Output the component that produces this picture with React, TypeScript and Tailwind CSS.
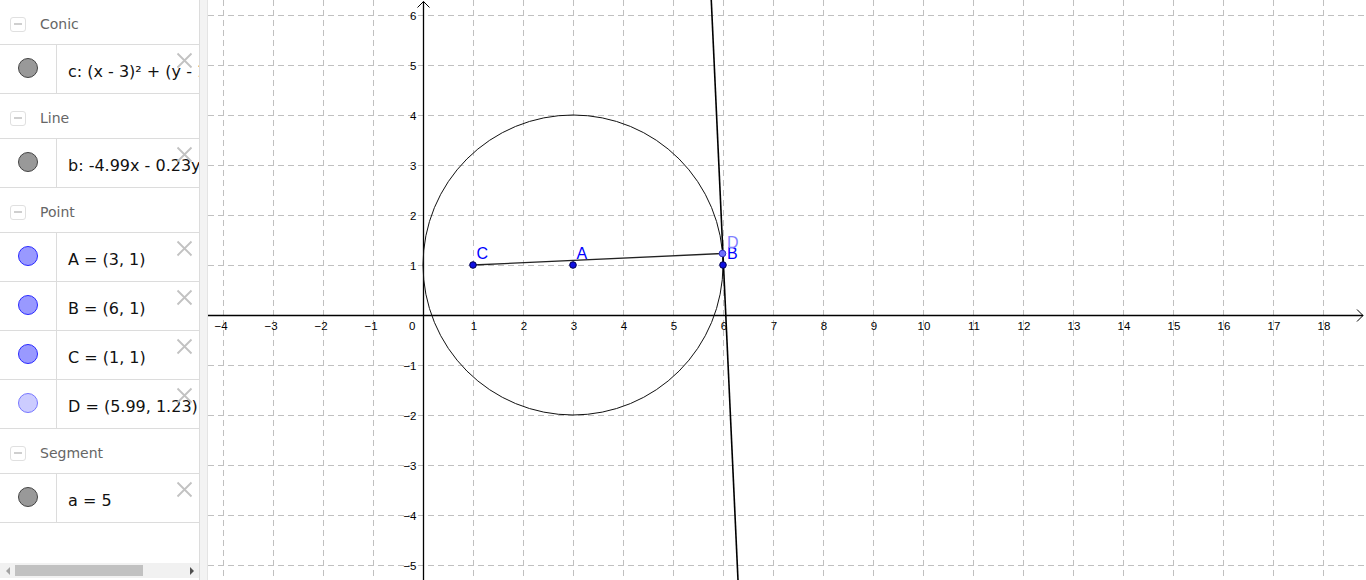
import React from "react";

type Item = { text: string; fill: string; stroke: string };
type Group = { title: string; items: Item[] };

const gray = { fill: "#999999", stroke: "#444444" };
const blue = { fill: "#9999ff", stroke: "#2a2aff" };
const light = { fill: "#ccccff", stroke: "#7777ff" };

const groups: Group[] = [
  { title: "Conic", items: [{ text: "c: (x - 3)² + (y - 1)² = 9", ...gray }] },
  { title: "Line", items: [{ text: "b: -4.99x - 0.23y = -30.17", ...gray }] },
  {
    title: "Point",
    items: [
      { text: "A = (3, 1)", ...blue },
      { text: "B = (6, 1)", ...blue },
      { text: "C = (1, 1)", ...blue },
      { text: "D = (5.99, 1.23)", ...light },
    ],
  },
  { title: "Segment", items: [{ text: "a = 5", ...gray }] },
];

function CloseIcon() {
  return (
    <svg width="17" height="17" viewBox="0 0 17 17" className="absolute right-[6px] top-[7px]">
      <path d="M1.5 1.5 L15.5 15.5 M15.5 1.5 L1.5 15.5" stroke="#c2c2c2" strokeWidth="1.8" fill="none" />
    </svg>
  );
}

function Header({ title }: { title: string }) {
  return (
    <div className="h-[45px] shrink-0 border-b border-[#dcdcdc] flex items-center pt-[4px]">
      <div className="ml-[10px] w-[16px] h-[15px] rounded-[3px] border border-[#e0e0e0] flex items-center justify-center">
        <div className="w-[8px] h-[2px] bg-[#cfcfcf]" />
      </div>
      <span className="ml-[14px] text-[14px] text-[#666666]" style={{ fontFamily: "'DejaVu Sans', sans-serif" }}>
        {title}
      </span>
    </div>
  );
}

function Row({ item }: { item: Item }) {
  return (
    <div className="relative h-[49px] shrink-0 border-b border-[#dcdcdc] flex overflow-hidden">
      <div className="w-[57px] shrink-0 border-r border-[#dcdcdc] flex items-center justify-center pr-[1px] pb-[3px]">
        <div
          className="w-[20px] h-[20px] rounded-full border-[1.5px]"
          style={{ backgroundColor: item.fill, borderColor: item.stroke }}
        />
      </div>
      <div
        className="pl-[11px] flex items-center pt-[5px] whitespace-nowrap text-[16px] text-[#111111]"
        style={{ fontFamily: "'DejaVu Sans', sans-serif" }}
      >
        {item.text}
      </div>
      <CloseIcon />
    </div>
  );
}

function AlgebraPanel() {
  return (
    <div className="w-[200px] h-[580px] shrink-0 border-r border-[#dcdcdc] flex flex-col bg-white overflow-hidden">
      <div className="flex-1 flex flex-col overflow-hidden">
        {groups.map((g) => (
          <React.Fragment key={g.title}>
            <Header title={g.title} />
            {g.items.map((it) => (
              <Row key={it.text} item={it} />
            ))}
          </React.Fragment>
        ))}
      </div>
      <div className="h-[15px] mb-[2px] shrink-0 bg-[#f1f1f1] flex items-center">
        <div className="w-[15px] flex items-center justify-center">
          <svg width="6" height="8" viewBox="0 0 6 8">
            <path d="M5 0 L1 4 L5 8 Z" fill="#a3a3a3" />
          </svg>
        </div>
        <div className="w-[128px] h-[11px] bg-[#c1c1c1]" />
        <div className="flex-1" />
        <div className="w-[15px] flex items-center justify-center">
          <svg width="6" height="8" viewBox="0 0 6 8">
            <path d="M1 0 L5 4 L1 8 Z" fill="#505050" />
          </svg>
        </div>
      </div>
    </div>
  );
}

const OX = 423.5;
const OY = 315.5;
const U = 50;

function Graphics() {
  const xs: number[] = [];
  for (let k = -4; k <= 18; k++) xs.push(k);
  const ys: number[] = [];
  for (let j = -5; j <= 6; j++) ys.push(j);
  const minus = (n: number) => (n < 0 ? "\u2212" + Math.abs(n) : String(n));

  // line b: -4.99x - 0.23y = -30.17
  const lx = (y: number) => (30.17 - 0.23 * y) / 4.99;
  const yTop = (OY - 0) / U;
  const yBot = (OY - 580) / U;
  const bx1 = OX + lx(yTop) * U;
  const bx2 = OX + lx(yBot) * U;

  const px = (x: number) => OX + x * U - 0.5;
  const py = (y: number) => OY - y * U - 0.5;

  return (
    <div className="flex-1 h-[580px] bg-white overflow-hidden">
      <svg width="1158" height="580" viewBox="208 0 1158 580" style={{ display: "block" }}>
        <g stroke="#c0c0c0" strokeWidth="1" strokeDasharray="6 4">
          {xs
            .filter((k) => k !== 0)
            .map((k) => (
              <line key={"vx" + k} x1={OX + k * U} y1={0} x2={OX + k * U} y2={580} />
            ))}
          {ys
            .filter((j) => j !== 0)
            .map((j) => (
              <line key={"hy" + j} x1={208} y1={OY - j * U} x2={1366} y2={OY - j * U} />
            ))}
        </g>
        {/* axes */}
        <g stroke="#000" strokeWidth="1.3" fill="none">
          <line x1={208} y1={OY} x2={1363} y2={OY} />
          <path d="M1357 309.5 L1363 315.5 L1357 321.5" strokeWidth="1" />
          <line x1={OX} y1={1.5} x2={OX} y2={580} />
          <path d="M417.5 7.5 L423.5 1.5 L429.5 7.5" strokeWidth="1" />
        </g>
        <g fontFamily="'Liberation Sans', Arial, sans-serif" fontSize="11.5" fill="#000">
          {xs
            .filter((k) => k !== 0)
            .map((k) => (
              <text key={"lx" + k} x={OX + k * U + (k < 0 ? -2.5 : 0.5)} y={330} textAnchor="middle">
                {minus(k)}
              </text>
            ))}
          <text x={415.5} y={330} textAnchor="end">
            0
          </text>
          {ys
            .filter((j) => j !== 0)
            .map((j) => (
              <text key={"ly" + j} x={416.5} y={OY - j * U + 4.5} textAnchor="end">
                {minus(j)}
              </text>
            ))}
        </g>
        {/* circle */}
        <circle cx={px(3)} cy={py(1)} r={150} fill="none" stroke="#111" strokeWidth="1" />
        {/* line b */}
        <line x1={bx1} y1={0} x2={bx2} y2={580} stroke="#000" strokeWidth="1.6" />
        {/* segment CD */}
        <line x1={px(1)} y1={py(1)} x2={px(5.99)} y2={py(1.23)} stroke="#222" strokeWidth="1.3" />
        {/* points */}
        {[1, 3, 6].map((x) => (
          <circle key={"p" + x} cx={px(x)} cy={py(1)} r={3.3} fill="#1010e0" stroke="#000050" strokeWidth="1" />
        ))}
        <circle cx={px(5.99)} cy={py(1.23)} r={3.3} fill="#7070ff" stroke="#3030c0" strokeWidth="1" />
        <g fontFamily="'Liberation Sans', Arial, sans-serif" fontSize="16">
          <text x={476.5} y={258.5} fill="#0000ff">
            C
          </text>
          <text x={576.5} y={258.5} fill="#0000ff">
            A
          </text>
          <text x={727} y={259} fill="#0000ff">
            B
          </text>
          <text x={727} y={247.5} fill="#8080ff">
            D
          </text>
        </g>
      </svg>
    </div>
  );
}

export default function App() {
  return (
    <div className="w-[1366px] h-[580px] flex overflow-hidden bg-white">
      <AlgebraPanel />
      <div className="w-[8px] h-[580px] shrink-0 bg-[#f3f3f3] border-r border-[#e4e4e4]" />
      <Graphics />
    </div>
  );
}
